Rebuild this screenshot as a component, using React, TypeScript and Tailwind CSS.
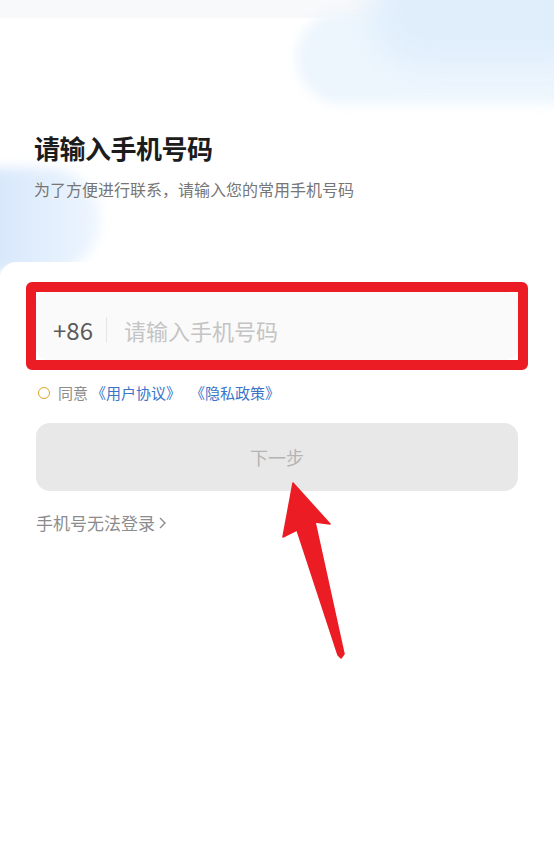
import React from 'react';

const font = { fontFamily: '"Noto Sans CJK SC", "Noto Sans", sans-serif' };

// red annotation arrow pointing at the button
const Arrow = () => (
  <svg className="absolute left-0 top-0 z-20 pointer-events-none" width="554" height="851" viewBox="0 0 554 851">
    <polygon
      points="293,483 330,524 315,522 344,654 341,658 338,655 297,530 283,537"
      fill="#ec1c24"
      stroke="#ec1c24"
      strokeWidth="1.5"
      strokeLinejoin="round"
    />
  </svg>
);

export default function App() {
  return (
    <div className="relative w-full min-h-[851px] bg-white overflow-hidden" style={font}>
      {/* background clouds */}
      <div className="absolute left-0 top-0 w-full h-[18px] bg-[#f7f9fb]" />
      <div className="absolute left-[296px] top-[12px] w-[300px] h-[92px] rounded-full bg-[#edf6fd] blur-[6px]" />
      <div className="absolute left-[370px] top-[-40px] w-[250px] h-[105px] rounded-full bg-[#e0eefc] blur-[14px]" />
      <div className="absolute left-[-70px] top-[168px] w-[170px] h-[104px] rounded-full bg-gradient-to-r from-[#c9def9] to-[#eef6fe] blur-[6px]" />

      <div className="relative h-[262px] pl-[34px] pr-9 pt-[130px]">
        <h1 className="text-[26px] leading-[36px] font-bold text-[#1c1c1c] tracking-[-0.5px]">请输入手机号码</h1>
        <p className="mt-[11px] text-[16px] leading-[24px] text-[#767676]">为了方便进行联系，请输入您的常用手机号码</p>
      </div>

      <div className="relative z-10 bg-white rounded-tl-[16px] px-9 pt-[30px] pb-10">
        <div className="relative">
          <div className="h-[68px] rounded-xl bg-[#fafafa] flex items-center pl-[17px] pt-[8px]">
            <span className="text-[24px] text-[#5a5a5a]">+86</span>
            <span className="ml-[13px] w-px h-[26px] bg-[#e6e6e6]" />
            <span className="ml-[17px] text-[22px] text-[#c4c4c4]">请输入手机号码</span>
          </div>
          <div className="absolute -inset-[10px] border-[10px] border-[#ec1c24] rounded-[6px]" />
        </div>

        <div className="mt-[22px] flex items-center h-[22px] text-[15px]">
          <span className="w-[12px] h-[12px] ml-[2px] rounded-full border-[1.5px] border-[#e0a424]" />
          <span className="ml-[8px] text-[#8c8c8c]">同意</span>
          <span className="ml-[3px] text-[#3a74c9]">《用户协议》</span>
          <span className="ml-[9px] text-[#3a74c9]">《隐私政策》</span>
        </div>

        <button className="mt-[19px] w-full h-[68px] rounded-[14px] bg-[#e8e8e8] text-[18px] text-[#b4b4b4]">下一步</button>

        <div className="mt-[20px] flex items-center h-[24px] text-[17px] text-[#8c8c8c]">
          手机号无法登录
          <svg className="ml-[3px]" width="9" height="14" viewBox="0 0 9 14">
            <path d="M2 2 L7 7 L2 12" fill="none" stroke="#8c8c8c" strokeWidth="1.4" />
          </svg>
        </div>
      </div>

      <Arrow />
    </div>
  );
}
